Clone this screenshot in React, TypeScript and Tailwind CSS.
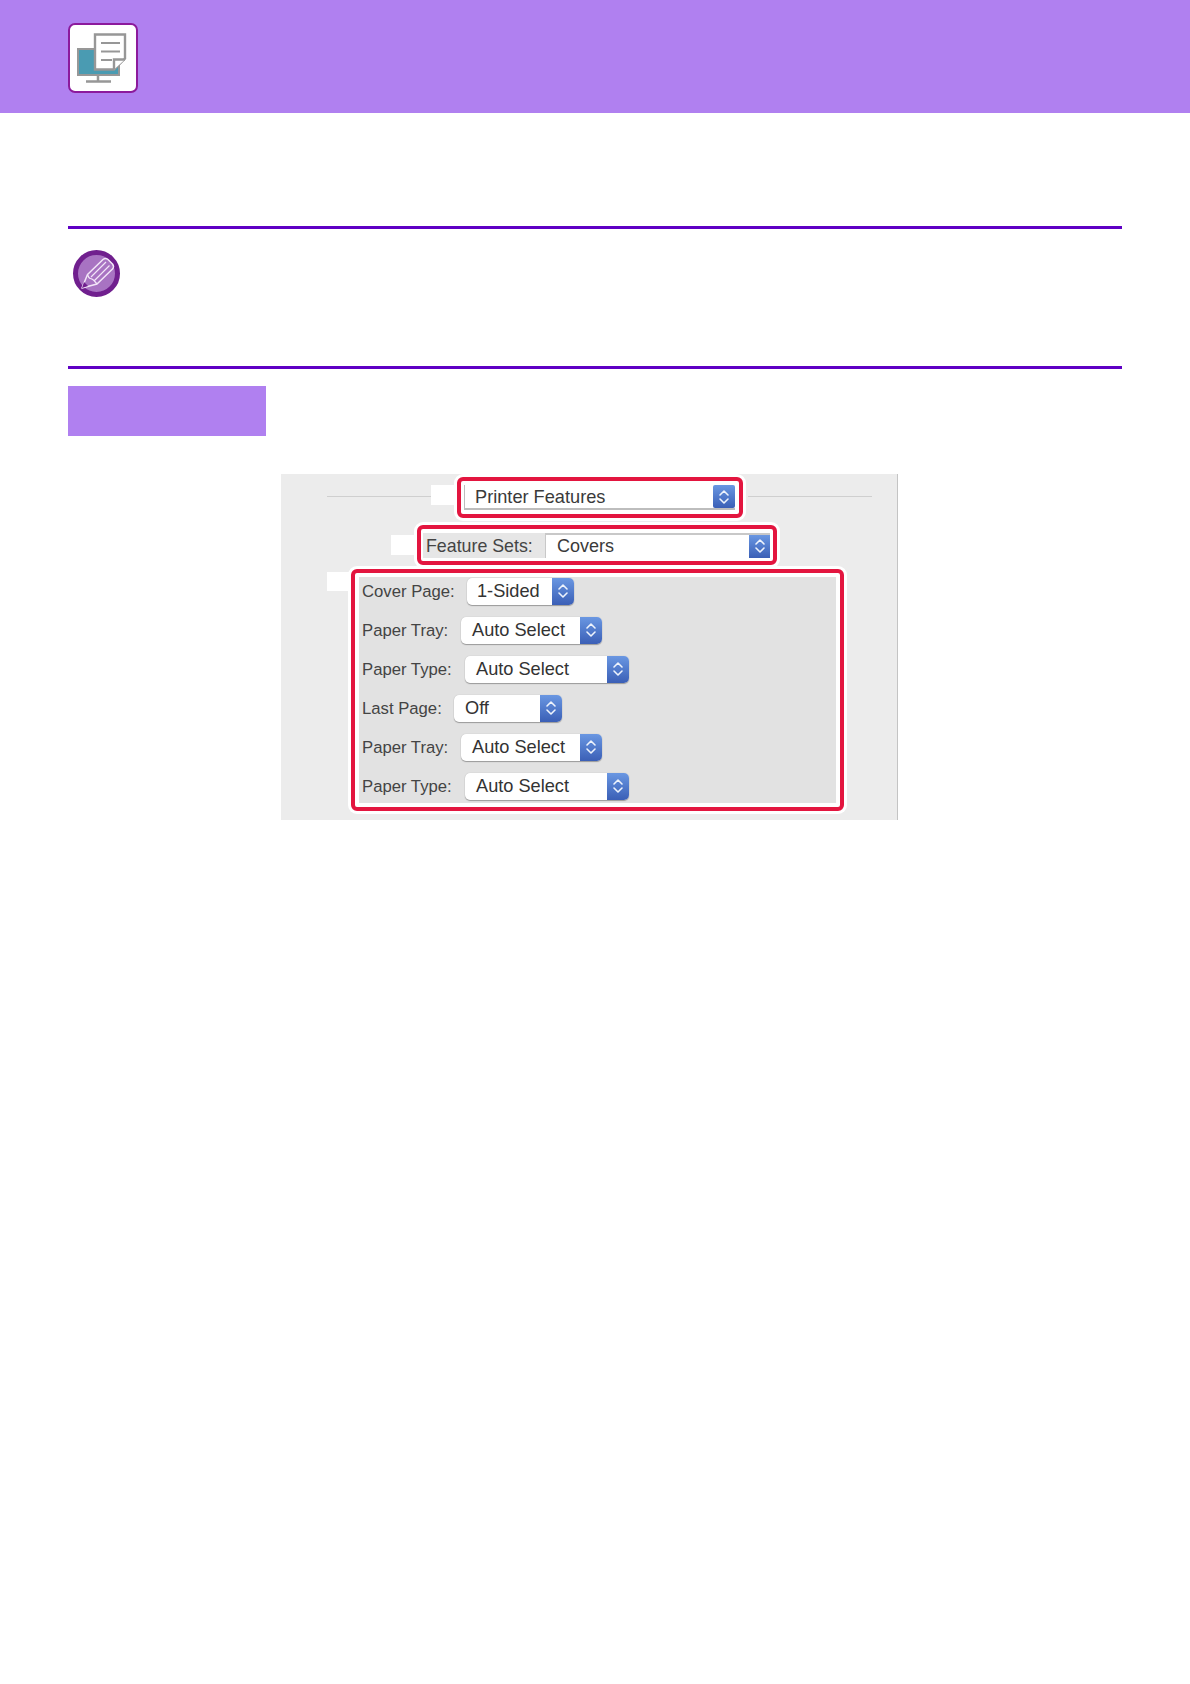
import React from 'react'

const coverRows = [
  { label: 'Cover Page:', value: '1-Sided', labelWidth: 'w-[105px]', width: 'w-[107px]', pad: 'pl-[10px]' },
  { label: 'Paper Tray:', value: 'Auto Select', labelWidth: 'w-[99px]', width: 'w-[141px]', pad: 'pl-[11px]' },
  { label: 'Paper Type:', value: 'Auto Select', labelWidth: 'w-[103px]', width: 'w-[164px]', pad: 'pl-[11px]' },
  { label: 'Last Page:', value: 'Off', labelWidth: 'w-[92px]', width: 'w-[108px]', pad: 'pl-[11px]' },
  { label: 'Paper Tray:', value: 'Auto Select', labelWidth: 'w-[99px]', width: 'w-[141px]', pad: 'pl-[11px]' },
  { label: 'Paper Type:', value: 'Auto Select', labelWidth: 'w-[103px]', width: 'w-[164px]', pad: 'pl-[11px]' },
]

function Stepper({ className }: { className: string }) {
  return (
    <span className={`flex items-center justify-center bg-gradient-to-b from-[#6a97e2] to-[#3b5fb6] shrink-0 ${className}`}>
      <svg width="12" height="18" viewBox="0 0 12 18" fill="none" stroke="#eef3fc" strokeWidth="1.6" strokeLinecap="round" strokeLinejoin="round">
        <path d="M2 7l4-4 4 4" />
        <path d="M2 11l4 4 4-4" />
      </svg>
    </span>
  )
}

function Popup({ value, width, pad }: { value: string; width: string; pad: string }) {
  return (
    <div className={`flex h-[27px] items-stretch justify-between overflow-hidden rounded-[5px] bg-white shadow-[0_1px_1px_#9a9a9a,0_0_1px_#b0b0b0] ${width}`}>
      <span className={`flex items-center pt-[2px] text-[18.2px] text-[#333] ${pad}`}>{value}</span>
      <Stepper className="w-[22px]" />
    </div>
  )
}

function MonitorIcon() {
  return (
    <svg className="h-full w-full" viewBox="70 25 66 66">
      <rect x="78" y="49" width="41" height="26" fill="#4a9bb2" stroke="#979797" strokeWidth="2" />
      <path d="M98 75v6M86 81.500h25" stroke="#979797" strokeWidth="2.500" fill="none" />
      <path d="M95 34.500h30v24l-11 11h-19z" fill="#fff" stroke="#979797" strokeWidth="2.400" />
      <path d="M114 69.500v-10h11" fill="#fff" stroke="#979797" strokeWidth="2.400" />
      <path d="M101 43h19M101 51.500h19M101 60h11" stroke="#979797" strokeWidth="1.800" fill="none" />
    </svg>
  )
}

function NoteIcon() {
  return (
    <svg className="h-[47px] w-[47px]" viewBox="73 249 47 47">
      <circle cx="96.500" cy="272.500" r="21" fill="#a873c2" stroke="#701f8e" strokeWidth="5" />
      <path d="M82 287l5.500-13.500L103 258.500q2.500-2 5 0l4.500 4.500q2 2.500 0 5L97 283z" fill="none" stroke="#f3e6f8" strokeWidth="1.500" strokeLinejoin="round" />
      <path d="M87.500 273.500q1 3.500 3 4t3.500 2l3 3.500M91 276l15-15M94.500 279.500l15-15" fill="none" stroke="#f3e6f8" strokeWidth="1.200" />
      <path d="M82 287l2-6 4 4z" fill="#701f8e" />
    </svg>
  )
}

export default function App() {
  return (
    <div className="min-h-[1684px] bg-white font-['Liberation_Sans',Arial,sans-serif]">
      <header className="flex h-[113px] items-center bg-[#b080f0] pl-[68px] pt-[2px]">
        <div className="h-[70px] w-[70px] overflow-hidden rounded-[7px] border-2 border-[#8c1a9c] bg-white">
          <MonitorIcon />
        </div>
      </header>

      <main className="px-[68px] pt-[113px]">
        <section className="h-[143px] border-y-[3px] border-[#5f00c4] pl-[5px] pt-[21px]">
          <NoteIcon />
        </section>

        <div className="mt-[17px] h-[50px] w-[198px] bg-[#b080f0]" />

        {/* dialog capture */}
        <div className="ml-[213px] mt-[38px] flex h-[346px] w-[617px] flex-col border-r border-[#c4c4c4] bg-[#ececec] pt-[3px]">
          <div className="flex items-center pl-[46px]">
            <div className="mb-[2px] h-px w-[104px] bg-[#cfcfcf]" />
            <div className="mb-[5px] h-[20px] w-[26px] bg-white" />
            <div className="flex h-[41px] w-[286px] items-center rounded-[6px] border-4 border-[#e3153f] bg-white pl-[3px] ring-3 ring-white">
              <div className="flex h-[25px] w-[271px] items-stretch justify-between border-b-2 border-l border-[#bdbdbd]">
                <span className="flex items-center pl-[10px] pt-[2px] text-[18.2px] text-[#3a3a3a]">Printer Features</span>
                <Stepper className="w-[22px] rounded-[2px]" />
              </div>
            </div>
            <div className="mb-[2px] ml-[5px] h-px w-[124px] bg-[#cfcfcf]" />
          </div>

          <div className="mt-[7px] flex items-center pl-[110px]">
            <div className="h-[20px] w-[26px] bg-white" />
            <div className="flex h-[40px] w-[360px] items-center rounded-[6px] border-4 border-[#e3153f] bg-white pl-[2px] ring-3 ring-white">
              <div className="flex h-[25px] w-[122px] items-center bg-[#e6e6e6] pl-[3px] pt-[2px] text-[17.8px] text-[#444]">Feature Sets:</div>
              <div className="flex h-[25px] w-[225px] items-stretch justify-between border-l border-t-2 border-[#c8c8c8]">
                <span className="flex items-center pl-[11px] text-[18px] text-[#3a3a3a]">Covers</span>
                <Stepper className="w-[21px]" />
              </div>
            </div>
          </div>

          <div className="mt-[4px] flex items-start pl-[46px]">
            <div className="mt-[3px] h-[19px] w-[24px] bg-white" />
            <div className="h-[242px] w-[493px] rounded-[6px] border-4 border-[#e3153f] bg-white p-[4px] ring-3 ring-white">
              <div className="flex h-[226px] flex-col gap-[12px] bg-[#e2e2e2] pl-[3px]">
                {coverRows.map((row, i) => (
                  <div key={i} className="flex h-[27px] items-center pt-[1px]">
                    <span className={`pt-[1px] text-[16.7px] text-[#444] ${row.labelWidth}`}>{row.label}</span>
                    <Popup value={row.value} width={row.width} pad={row.pad} />
                  </div>
                ))}
              </div>
            </div>
          </div>
        </div>
      </main>
    </div>
  )
}
